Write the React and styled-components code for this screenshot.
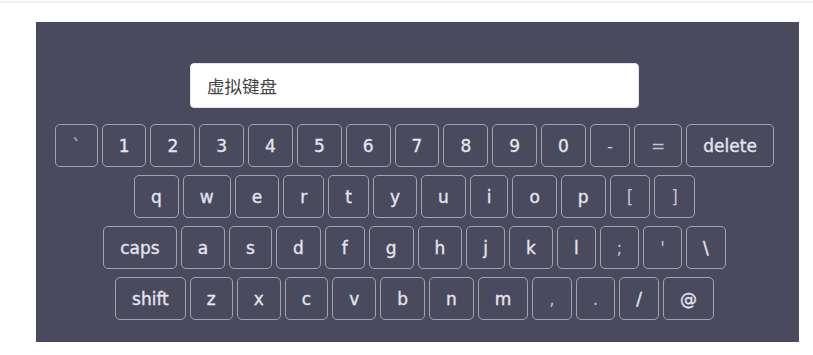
import styled, { createGlobalStyle } from "styled-components";

const GlobalStyle = createGlobalStyle`
  body {
    margin: 0;
    background: #ffffff;
    font-family: "DejaVu Sans", "Noto Sans CJK SC", sans-serif;
  }
`;

const rows = [
  ["`", "1", "2", "3", "4", "5", "6", "7", "8", "9", "0", "-", "=", "delete"],
  ["q", "w", "e", "r", "t", "y", "u", "i", "o", "p", "[", "]"],
  ["caps", "a", "s", "d", "f", "g", "h", "j", "k", "l", ";", "'", "\\"],
  ["shift", "z", "x", "c", "v", "b", "n", "m", ",", ".", "/", "@"],
];

export default function App() {
  return (
    <>
      <GlobalStyle />
      <TopLine />
      <Page>
        <Panel>
          <Input defaultValue="虚拟键盘" readOnly />
          <Keyboard>
            {rows.map((row, i) => (
              <Row key={i}>
                {row.map((k) => (
                  <Key key={k} $light={k.length === 1 && !/[a-z0-9@\\/]/.test(k)}>
                    {k}
                  </Key>
                ))}
              </Row>
            ))}
          </Keyboard>
        </Panel>
      </Page>
    </>
  );
}

const TopLine = styled.div`
  height: 2px;
  margin-top: 1px;
  background: #efefef;
`;

const Page = styled.div`
  padding: 19px 14px 0 36px;
`;

const Panel = styled.div`
  width: 763px;
  box-sizing: border-box;
  background: #4a4a5e;
  padding: 41px 6px 22px 0;
  display: flex;
  flex-direction: column;
  align-items: center;
`;

const Input = styled.input`
  width: 449px;
  height: 45px;
  box-sizing: border-box;
  border: 1px solid #e4e4ea;
  border-radius: 4px;
  background: #ffffff;
  padding: 0 16px;
  font-family: "Noto Sans CJK SC", sans-serif;
  font-size: 17.5px;
  color: #444444;
  outline: none;
  margin-bottom: 16px;
`;

const Keyboard = styled.div`
  display: flex;
  flex-direction: column;
  align-items: center;
  gap: 8px;
`;

const Row = styled.div`
  display: flex;
  gap: 4px;
`;

const Key = styled.button`
  height: 43px;
  box-sizing: border-box;
  padding: 1px 16px 0;
  border: 1px solid #a3a3b0;
  border-radius: 5px;
  background: transparent;
  color: ${(p) => (p.$light ? "#c4c4d0" : "#e4e4ee")};
  font-family: "DejaVu Sans", sans-serif;
  font-size: 17px;
  -webkit-text-stroke: ${(p) => (p.$light ? "0" : "0.35px")} currentColor;
  cursor: pointer;
`;
